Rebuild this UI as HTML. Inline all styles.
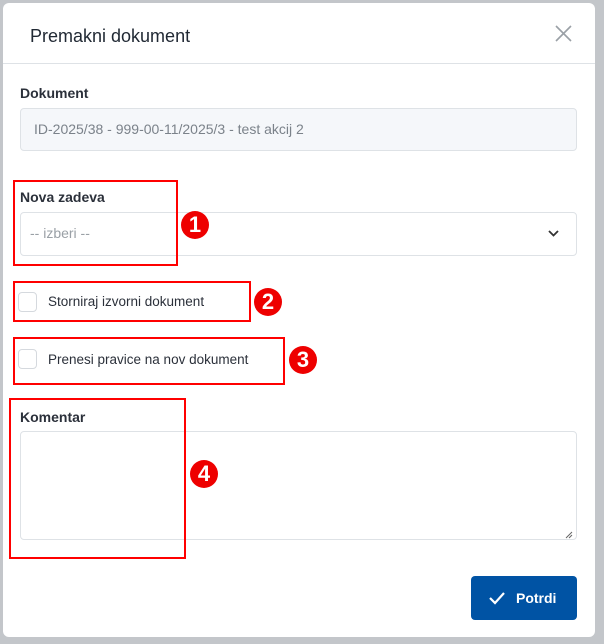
<!DOCTYPE html>
<html><head><style>
body{margin:0;width:604px;height:644px;background:#c3c6ca;position:relative;overflow:hidden;font-family:"Liberation Sans",sans-serif;color:#212529}
.m{position:absolute;left:3px;top:3px;width:592px;height:634px;background:#fff;border-radius:6px}
.a{position:absolute}
.t{left:27px;top:23px;font-size:18px;font-weight:500;color:#212934}
.hl{left:0;top:60px;width:592px;height:1px;background:#dee2e6}
.lbl{font-size:14px;font-weight:bold;color:#2b303a}
.in{border:1px solid #dee2e6;border-radius:4px;box-sizing:border-box;left:17px;width:557px}
.cb{width:19px;height:20px;border:1px solid #d5d9de;border-radius:4px;box-sizing:border-box;left:15px}
.ct{font-size:13.5px;color:#2b303a}
.r{border:2px solid #f00;box-sizing:border-box}
.n{width:28px;height:28px;border-radius:50%;background:#e00;color:#fff;font-weight:bold;font-size:22px;text-align:center;line-height:28px}
</style></head><body>
<div class="m">
<div class="a t">Premakni dokument</div>
<svg class="a" style="left:552px;top:22px" width="17" height="17" viewBox="0 0 17 17"><path d="M1 1L16 16M16 1L1 16" stroke="#9aa0a6" stroke-width="1.6"/></svg>
<div class="a hl"></div>
<div class="a lbl" style="left:17px;top:82px">Dokument</div>
<div class="a in" style="top:105px;height:43px;background:#f5f7fa;font-size:14px;color:#7b828a;padding:12px 0 0 13px">ID-2025/38 - 999-00-11/2025/3 - test akcij 2</div>
<div class="a lbl" style="left:17px;top:186px">Nova zadeva</div>
<div class="a in" style="top:209px;height:44px;font-size:14px;color:#9aa0a6;padding:12px 0 0 9px">-- izberi --</div>
<svg class="a" style="left:544px;top:226px" width="13" height="9" viewBox="0 0 13 9"><path d="M2 2L6.5 6.5L11 2" stroke="#333" stroke-width="1.8" fill="none"/></svg>
<div class="a cb" style="top:289px"></div>
<div class="a ct" style="left:45px;top:291px">Storniraj izvorni dokument</div>
<div class="a cb" style="top:346px"></div>
<div class="a ct" style="left:45px;top:349px">Prenesi pravice na nov dokument</div>
<div class="a lbl" style="left:17px;top:406px">Komentar</div>
<div class="a in" style="top:428px;height:109px"></div>
<svg class="a" style="left:562px;top:528px" width="8" height="8"><path d="M1 7L7 1M4 7L7 4" stroke="#666" stroke-width="1"/></svg>
<div class="a" style="left:468px;top:573px;width:106px;height:44px;background:#0053a4;border-radius:4px;color:#fff;font-weight:bold;font-size:14px">
<svg class="a" style="left:17px;top:14px" width="18" height="16" viewBox="0 0 18 16"><path d="M2 8L7 13L16 3" stroke="#fff" stroke-width="2.2" fill="none"/></svg>
<span class="a" style="left:45px;top:14px">Potrdi</span></div>
</div>
<div class="a r" style="left:13px;top:180px;width:165px;height:86px"></div>
<div class="a n" style="left:181px;top:211px">1</div>
<div class="a r" style="left:13px;top:281px;width:238px;height:41px"></div>
<div class="a n" style="left:254px;top:288px">2</div>
<div class="a r" style="left:13px;top:337px;width:272px;height:48px"></div>
<div class="a n" style="left:289px;top:346px">3</div>
<div class="a r" style="left:9px;top:398px;width:177px;height:161px"></div>
<div class="a n" style="left:190px;top:460px">4</div>
</body></html>
